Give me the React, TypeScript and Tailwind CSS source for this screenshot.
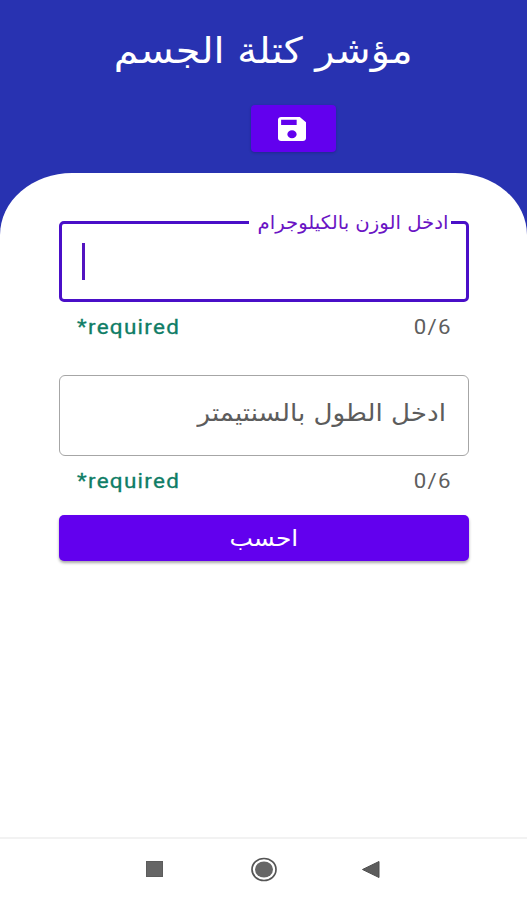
import { useState } from 'react'

const MAX_LENGTH = 6

function SaveIcon() {
  return (
    <svg viewBox="3 3 18 18" preserveAspectRatio="none" className="w-7 h-6 fill-white" aria-hidden>
      <path d="M17 3H5c-1.11 0-2 .9-2 2v14c0 1.1.89 2 2 2h14c1.1 0 2-.9 2-2V7l-4-4zm-5 16c-1.66 0-3-1.34-3-3s1.34-3 3-3 3 1.34 3 3-1.34 3-3 3zm3-10H5V5h10v4z" />
    </svg>
  )
}

function HelperRow({ length }: { length: number }) {
  return (
    <div className="flex justify-between h-[26px] leading-[27px] pl-[18px] pr-[17px] text-[21px] font-['Roboto',sans-serif]">
      <span className="text-[#0f7d66] tracking-[1.2px] origin-left scale-x-[1.07] [-webkit-text-stroke:0.3px]">
        *required
      </span>
      <span className="text-[#5e5e5e] tracking-[1.1px] origin-right scale-x-[1.06]">
        {length}/{MAX_LENGTH}
      </span>
    </div>
  )
}

function BottomNav() {
  return (
    <nav className="h-[63px] border-t-2 border-[#f2f2f2] bg-white flex justify-center">
      <svg width="240" height="60" viewBox="0 0 240 60" aria-hidden>
        <rect x="2.5" y="22.5" width="16" height="15" fill="#666666" stroke="#5c5c5c" />
        <ellipse cx="120" cy="30.5" rx="12" ry="11" fill="none" stroke="#555555" strokeWidth="1.7" />
        <ellipse cx="120" cy="30.5" rx="9" ry="8" fill="#666666" />
        <path d="M218.5 30.5 L235 22.5 V38.5 Z" fill="#5c5c5c" stroke="#4d4d4d" />
      </svg>
    </nav>
  )
}

function App() {
  const [weight] = useState('')
  const [height] = useState('')

  return (
    <div className="flex flex-col h-[900px] w-[527px] bg-white overflow-hidden font-['DejaVu_Sans',sans-serif]">
      <div className="bg-[#2832b1]">
        <header className="flex flex-col items-center h-[173px]">
          <h1
            dir="rtl"
            className="h-[105px] leading-[101px] text-[36px] text-white whitespace-nowrap scale-x-[1.105]"
          >
            مؤشر كتلة الجسم
          </h1>
          <button
            aria-label="حفظ"
            className="flex items-center justify-center w-[85px] h-[47px] ml-[59px] pr-[2px] rounded-[4px] bg-[#6200ee] shadow-[0_1px_3px_rgba(0,0,0,0.2)]"
          >
            <SaveIcon />
          </button>
        </header>
        <div className="h-[62px] rounded-t-[72px_62px] bg-white" />
      </div>

      <main className="flex-1 flex flex-col pl-[59px] pr-[58px] -mt-[26px]">
        <fieldset dir="rtl" className="h-[93px] border-[3px] border-[#4a0fc8] rounded-[5px] pr-[15px]">
          <legend className="w-[202px] h-[26px] leading-[27px] pr-[3px] text-[19px] text-[#6a14c4] whitespace-nowrap">
            <span className="inline-block origin-right scale-x-[1.035]">ادخل الوزن بالكيلوجرام</span>
          </legend>
          <div dir="ltr" className="pl-[20px] pt-[8px]">
            <span className="block w-[3px] h-[37px] bg-[#5314c0]" />
          </div>
        </fieldset>
        <div className="pt-[12px]">
          <HelperRow length={weight.length} />
        </div>

        <div
          dir="rtl"
          className="mt-[35px] h-[81px] leading-[75px] pr-[22px] border border-[#a6a6a6] rounded-[6px] text-[24px] text-[#5c5c5c] whitespace-nowrap"
        >
          <span className="inline-block origin-right scale-x-[1.09]">ادخل الطول بالسنتيمتر</span>
        </div>
        <div className="pt-[12px]">
          <HelperRow length={height.length} />
        </div>

        <button className="mt-[21px] h-[46px] rounded-[5px] bg-[#6200ee] text-white text-[23px] leading-[44px] shadow-[0_2px_3px_rgba(0,0,0,0.35)]">
          <span className="inline-block scale-x-[1.08]">احسب</span>
        </button>
      </main>

      <BottomNav />
    </div>
  )
}

export default App
